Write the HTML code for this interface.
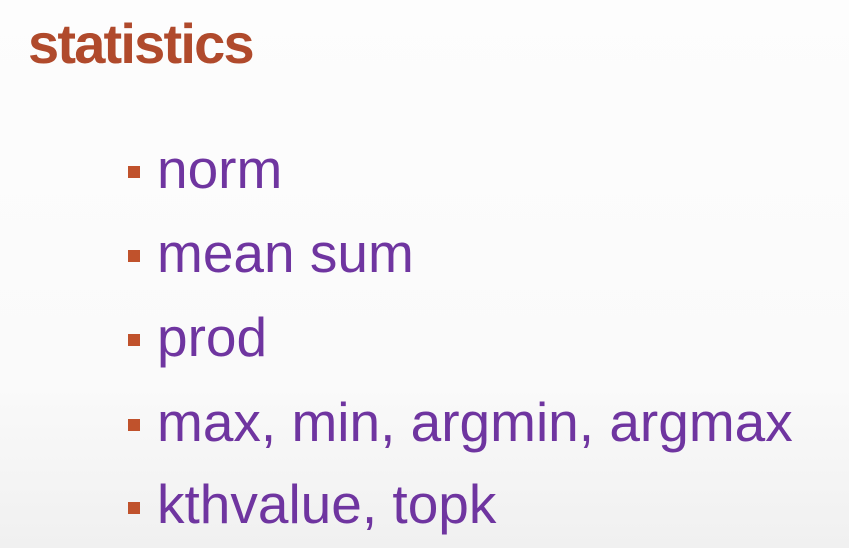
<!DOCTYPE html>
<html><head><meta charset="utf-8"><style>
html,body{margin:0;padding:0}
body{width:849px;height:548px;overflow:hidden;position:relative;background:linear-gradient(#fdfdfd 0%,#fafafa 70%,#f0f0f0 100%);font-family:"Liberation Sans",sans-serif}
.t{position:absolute;left:28px;top:16px;font-size:56px;line-height:56px;font-weight:bold;color:#b04a2c;letter-spacing:-1.8px}
.i{position:absolute;left:157px;font-size:55px;line-height:54px;color:#6f35a0;white-space:nowrap}
.b{position:absolute;left:128px;width:12px;height:12px;background:#c0522c}
</style></head><body>
<div class="t">statistics</div>
<div class="b" style="top:166px"></div><div class="i" style="top:142px">norm</div>
<div class="b" style="top:250px"></div><div class="i" style="top:226px">mean sum</div>
<div class="b" style="top:334px"></div><div class="i" style="top:310px">prod</div>
<div class="b" style="top:419px"></div><div class="i" style="top:395px">max, min, argmin, argmax</div>
<div class="b" style="top:502px"></div><div class="i" style="top:477px">kthvalue, topk</div>
</body></html>
